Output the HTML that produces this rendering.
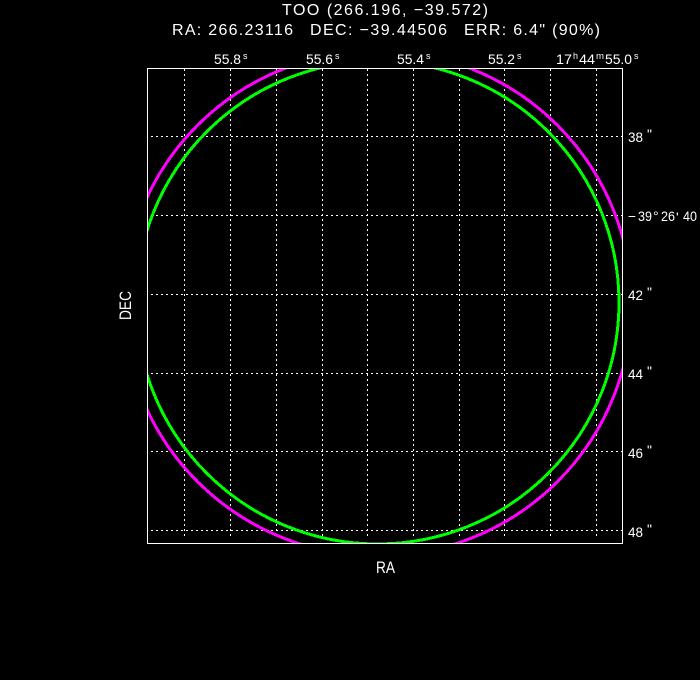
<!DOCTYPE html>
<html>
<head>
<meta charset="utf-8">
<style>
html,body{margin:0;padding:0;background:#000;width:700px;height:680px;overflow:hidden}
svg{display:block}
text{fill:#fff;font-family:"Liberation Sans",sans-serif;font-weight:normal}
.t{font-size:16px}
.l{font-size:13.5px}
.s{font-size:9px}
.q{font-size:14px}
.a{font-size:16.5px}
</style>
</head>
<body>
<svg width="700" height="680" viewBox="0 0 700 680" xmlns="http://www.w3.org/2000/svg">
<rect width="700" height="680" fill="#000"/>
<defs><clipPath id="c"><rect x="147" y="68" width="476" height="476"/></clipPath></defs>
<g stroke="#fff" stroke-width="1" shape-rendering="crispEdges" fill="none" stroke-dasharray="2 3">
<path d="M184.5 69V539M230.5 69V539M276.5 69V539M322.5 69V539M367.5 69V539M413.5 69V539M459.5 69V539M504.5 69V539M550.5 69V539M596.5 69V539"/>
<path d="M151 136.5H622M151 215.5H622M151 294.5H622M151 373.5H622M151 451.5H622M151 530.5H622"/>
</g>
<g clip-path="url(#c)" fill="none" stroke-width="3" shape-rendering="crispEdges">
<ellipse cx="377.5" cy="303.5" rx="254" ry="252.5" stroke="#ff00ff"/>
<circle cx="377.5" cy="302.5" r="241.5" stroke="#00ff00"/>
</g>
<rect x="147.5" y="68.5" width="475" height="475" fill="none" stroke="#fff" stroke-width="1" shape-rendering="crispEdges"/>

<text class="t" x="282" y="15" textLength="206" lengthAdjust="spacing">TOO (266.196, −39.572)</text>
<text class="t" x="172" y="35" textLength="121" lengthAdjust="spacing">RA: 266.23116</text>
<text class="t" x="310" y="35" textLength="137" lengthAdjust="spacing">DEC: −39.44506</text>
<text class="t" x="464" y="35" textLength="136" lengthAdjust="spacing">ERR: 6.4" (90%)</text>

<text class="l" x="214" y="64" textLength="27" lengthAdjust="spacingAndGlyphs">55.8</text><text class="s" x="243" y="59">s</text>
<text class="l" x="306" y="64" textLength="27" lengthAdjust="spacingAndGlyphs">55.6</text><text class="s" x="335" y="59">s</text>
<text class="l" x="397" y="64" textLength="27" lengthAdjust="spacingAndGlyphs">55.4</text><text class="s" x="426" y="59">s</text>
<text class="l" x="488" y="64" textLength="27" lengthAdjust="spacingAndGlyphs">55.2</text><text class="s" x="517" y="59">s</text>
<text class="l" x="556" y="64" textLength="16" lengthAdjust="spacingAndGlyphs">17</text><text class="s" x="573" y="59">h</text>
<text class="l" x="579" y="64" textLength="16" lengthAdjust="spacingAndGlyphs">44</text><text class="s" x="596" y="59" textLength="8" lengthAdjust="spacingAndGlyphs">m</text>
<text class="l" x="605" y="64" textLength="27" lengthAdjust="spacingAndGlyphs">55.0</text><text class="s" x="634" y="59">s</text>

<text class="l" x="628" y="142" textLength="15" lengthAdjust="spacingAndGlyphs">38</text><text class="q" x="647" y="139">"</text>
<text class="l" x="628" y="221" textLength="8" lengthAdjust="spacingAndGlyphs">−</text><text class="l" x="638" y="221" textLength="14" lengthAdjust="spacingAndGlyphs">39</text><text class="q" x="653" y="221">°</text><text class="l" x="661" y="221" textLength="14" lengthAdjust="spacingAndGlyphs">26</text><text class="q" x="676" y="222">'</text><text class="l" x="683" y="221" textLength="14" lengthAdjust="spacingAndGlyphs">40</text>
<text class="l" x="628" y="300" textLength="15" lengthAdjust="spacingAndGlyphs">42</text><text class="q" x="647" y="297">"</text>
<text class="l" x="628" y="379" textLength="15" lengthAdjust="spacingAndGlyphs">44</text><text class="q" x="647" y="376">"</text>
<text class="l" x="628" y="458" textLength="15" lengthAdjust="spacingAndGlyphs">46</text><text class="q" x="647" y="455">"</text>
<text class="l" x="628" y="537" textLength="15" lengthAdjust="spacingAndGlyphs">48</text><text class="q" x="647" y="534">"</text>

<text class="a" x="376" y="573" textLength="19" lengthAdjust="spacingAndGlyphs">RA</text>
<text class="a" transform="translate(131,320) rotate(-90)" textLength="29" lengthAdjust="spacingAndGlyphs">DEC</text>
</svg>
</body>
</html>
